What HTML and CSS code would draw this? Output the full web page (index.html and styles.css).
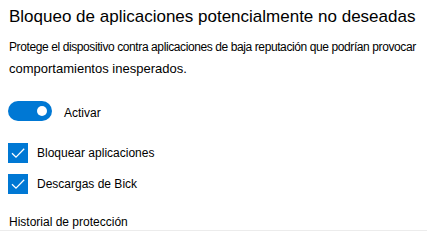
FILE: index.html
```html
<!DOCTYPE html>
<html lang="es">
<head>
    <meta charset="UTF-8">
    <title>Bloqueo de aplicaciones</title>
    <link rel="stylesheet" href="styles.css">
</head>
<body>
    <div class="panel">
        <h1>Bloqueo de aplicaciones potencialmente no deseadas</h1>
        <p class="desc"><span class="narrow">Protege el dispositivo contra aplicaciones de baja reputación que podrían provocar</span><br>comportamientos inesperados.</p>
        <div class="toggle-row">
            <span class="toggle"><span class="knob"></span></span>
            <span class="toggle-label">Activar</span>
        </div>
        <div class="check-row">
            <span class="box">
                <svg width="20" height="20" viewBox="0 0 20 20"><path d="M4 10.2 L8 14.2 L16.2 5.8" fill="none" stroke="#fff" stroke-width="1.3"/></svg>
            </span>
            <span class="check-label">Bloquear aplicaciones</span>
        </div>
        <div class="check-row">
            <span class="box">
                <svg width="20" height="20" viewBox="0 0 20 20"><path d="M4 10.2 L8 14.2 L16.2 5.8" fill="none" stroke="#fff" stroke-width="1.3"/></svg>
            </span>
            <span class="check-label">Descargas de Bick</span>
        </div>
        <div class="history">Historial de protección</div>
    </div>
</body>
</html>
```

FILE: styles.css
```css
body {
    margin: 0;
    background: #fff;
    font-family: "Liberation Sans", Arial, sans-serif;
    color: #000;
    overflow: hidden;
}
.panel {
    height: 231px;
    padding: 0 0 0 9px;
    border-bottom: 1px solid #ececec;
    box-sizing: border-box;
    overflow: hidden;
}
h1 {
    margin: 0;
    padding-top: 7px;
    font-size: 17px;
    font-weight: normal;
    line-height: 20px;
    white-space: nowrap;
}
.desc {
    margin: 9px 0 0;
    font-size: 13px;
    line-height: 22px;
    white-space: nowrap;
}
.narrow {
    font-size: 12px;
    letter-spacing: -0.4px;
}
.toggle-row {
    display: flex;
    align-items: center;
    margin-top: 21px;
    margin-left: -1px;
}
.toggle {
    display: flex;
    align-items: center;
    justify-content: flex-end;
    width: 44px;
    height: 20px;
    border-radius: 10px;
    background: #0078d4;
    box-sizing: border-box;
    padding-right: 5px;
}
.knob {
    width: 10px;
    height: 10px;
    border-radius: 50%;
    background: #fff;
}
.toggle-label {
    margin-left: 12px;
    font-size: 12px;
    padding-top: 3px;
}
.check-row {
    display: flex;
    align-items: center;
    margin-top: 11px;
    margin-left: -1px;
}
.toggle-row + .check-row {
    margin-top: 22px;
}
.box {
    display: block;
    width: 20px;
    height: 20px;
    background: #0078d4;
}
.box svg {
    display: block;
}
.check-label {
    margin-left: 9px;
    font-size: 12px;
}
.history {
    margin-top: 21px;
    font-size: 12px;
}
```
